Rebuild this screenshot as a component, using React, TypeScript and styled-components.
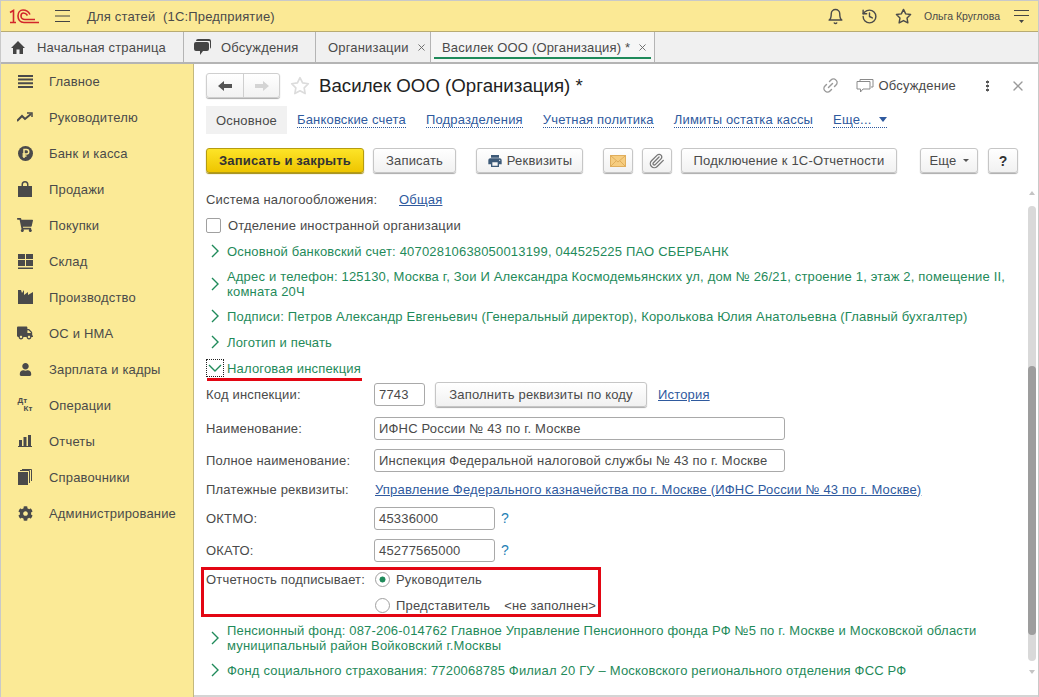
import { FunctionComponent, ReactNode } from "react"
import styled, { createGlobalStyle } from "styled-components"
import { FaShoppingCart, FaUser, FaCog, FaTruck } from "react-icons/fa"
import { FiBell, FiStar, FiX, FiLink2 } from "react-icons/fi"
import { LuHistory, LuPaperclip } from "react-icons/lu"
import { MdPrint } from "react-icons/md"

const Global = createGlobalStyle`
    html, body{
        margin: 0;
        padding: 0;
        background: #fff;
    }
    *{
        box-sizing: border-box;
    }
`

const Page = styled.div`
    width: 1039px;
    height: 697px;
    overflow: hidden;
    display: flex;
    flex-direction: column;
    font-family: "Liberation Sans", Arial, sans-serif;
    font-size: 13px;
    letter-spacing: 0.18px;
    color: #4a4a4a;
    border: 1px solid #c9c9c9;
    border-bottom: none;
`

const TopBar = styled.div`
    height: 31px;
    flex: none;
    background: #fbe995;
    border-bottom: 1px solid #b8ab72;
    display: flex;
    align-items: center;
    padding-left: 8px;
`

const BurgerSlot = styled.span`
    margin-left: 16px;
    display: flex;
`

const Title = styled.div`
    margin-left: 17px;
    white-space: pre;
    flex: 1;
`

const TopIcons = styled.div`
    display: flex;
    align-items: center;
    gap: 17px;
    margin-right: 9px;
    svg{
        display: block;
    }
`

const UserName = styled.span`
    font-size: 10.5px;
    letter-spacing: 0;
    margin: 0 -3px 0 -5px;
`

const TabBar = styled.div`
    height: 32px;
    flex: none;
    background: #f0f0f0;
    border-bottom: 2px solid #b4b4b4;
    display: flex;
`

const Tab = styled.div<{ $w: number; $pl?: number; $active?: boolean }>`
    width: ${p => p.$w}px;
    height: 30px;
    flex: none;
    display: flex;
    align-items: center;
    border-right: 1px solid #b4b4b4;
    padding-left: ${p => p.$pl ?? 10}px;
    position: relative;
    background: ${p => (p.$active ? "#f6f6f6" : "transparent")};
    ${p => p.$active && `
        &::after{
            content: "";
            position: absolute;
            left: 3px;
            right: 3px;
            bottom: 3px;
            height: 2px;
            background: #1f8a5a;
        }
    `}
`

const TabLabel = styled.span<{ $ml?: number }>`
    margin-left: ${p => p.$ml ?? 0}px;
    white-space: nowrap;
`

const TabClose = styled(FiX)`
    margin-left: 7px;
    font-size: 11px;
    color: #666;
`

const Body = styled.div`
    flex: 1;
    display: flex;
    min-height: 0;
`

const Sidebar = styled.nav`
    width: 193px;
    flex: none;
    background: #fbea96;
    border-right: 1px solid #c4b97d;
    display: flex;
    flex-direction: column;
`

const SideItem = styled.div`
    height: 36px;
    display: flex;
    align-items: center;
    padding-left: 16px;
    &:first-child{
        margin-top: -1px;
    }
`

const SideIcon = styled.div`
    width: 16px;
    height: 16px;
    margin-right: 16px;
    display: flex;
    align-items: center;
    justify-content: center;
`

const DtKt = styled.span`
    font-size: 8px;
    font-weight: bold;
    line-height: 8px;
    letter-spacing: 0;
    display: flex;
    flex-direction: column;
    span:last-child{
        margin-left: 6px;
    }
`

const Main = styled.main`
    flex: 1;
    min-width: 0;
    display: flex;
    flex-direction: column;
    padding-left: 12px;
    border-bottom: 2px solid #d4d4d4;
`

const Heading = styled.div`
    height: 42px;
    flex: none;
    display: flex;
    align-items: center;
    padding-top: 1px;
`

const NavGroup = styled.div`
    width: 74px;
    height: 25px;
    display: flex;
    border: 1px solid #cfcfcf;
    border-radius: 3px;
    box-shadow: 0 1px 1px #aaa;
    background: linear-gradient(#fff, #f2f2f2);
`

const NavButton = styled.div<{ $muted?: boolean }>`
    flex: ${p => (p.$muted ? 1 : "none")};
    width: 37px;
    display: flex;
    align-items: center;
    justify-content: center;
    ${p => !p.$muted && "border-right: 1px solid #cfcfcf;"}
`

const HeadingStar = styled(FiStar)`
    margin-left: 10px;
    color: #dcdcdc;
    font-size: 20px;
`

const HeadingText = styled.h1`
    margin: 0 0 0 9px;
    font-size: 18.7px;
    letter-spacing: 0;
    font-weight: normal;
    color: #222;
    flex: 1;
    white-space: nowrap;
`

const HeadingTools = styled.div`
    display: flex;
    align-items: center;
    color: #9a9a9a;
    padding-right: 12px;
`

const ToolLink = styled(FiLink2)`
    transform: rotate(-45deg);
    margin-right: 17px;
`

const ToolText = styled.span`
    color: #4a4a4a;
    margin: 0 30px 0 4px;
`

const Dots = styled.span`
    width: 3px;
    height: 12px;
    margin-right: 21px;
    background: radial-gradient(circle at center, #555 1.4px, transparent 1.6px) 0 0 / 3px 4px;
`

const Sections = styled.div`
    height: 28px;
    flex: none;
    display: flex;
    align-items: center;
    gap: 20px;
`

const SectionCurrent = styled.div`
    width: 81px;
    height: 28px;
    background: #f1f1f1;
    display: flex;
    align-items: center;
    justify-content: center;
    margin-right: -10px;
`

const SectionLink = styled.a`
    color: #2f5a9e;
    border-bottom: 1px dotted #2f5a9e;
    line-height: 15px;
    display: flex;
    align-items: center;
`

const Caret = styled.span`
    margin-left: 8px;
    border-left: 4px solid transparent;
    border-right: 4px solid transparent;
    border-top: 5px solid #2f5a9e;
`

const SmallCaret = styled.span`
    margin-left: 6px;
    border-left: 3px solid transparent;
    border-right: 3px solid transparent;
    border-top: 3px solid #555;
`

const Toolbar = styled.div`
    height: 25px;
    margin-top: 14px;
    flex: none;
    display: flex;
    align-items: center;
`

const Button = styled.div<{ $w: number; $ml?: number; $primary?: boolean }>`
    width: ${p => p.$w}px;
    height: 25px;
    flex: none;
    margin-left: ${p => p.$ml ?? 0}px;
    display: flex;
    align-items: center;
    justify-content: center;
    white-space: nowrap;
    border-radius: 3px;
    border: 1px solid ${p => (p.$primary ? "#b59c10" : "#c6c6c6")};
    box-shadow: 0 1px 1px ${p => (p.$primary ? "#a08a10" : "#aaa")};
    background: ${p => (p.$primary ? "linear-gradient(#fde428, #eec500)" : "linear-gradient(#fff, #f1f1f1)")};
    color: ${p => (p.$primary ? "#333" : "#4a4a4a")};
    font-weight: ${p => (p.$primary ? "bold" : "normal")};
`

const PrintIcon = styled(MdPrint)`
    margin-right: 4px;
    color: #3d5a78;
`

const Question = styled.b`
    font-size: 14px;
    color: #333;
`

const FormArea = styled.div`
    flex: 1;
    min-height: 0;
    margin-top: 13px;
    display: flex;
`

const Fields = styled.div`
    flex: 1;
    min-width: 0;
    display: flex;
    flex-direction: column;
`

const Row = styled.div<{ $h?: number; $mt?: number }>`
    height: ${p => p.$h ?? 26}px;
    margin-top: ${p => p.$mt ?? 0}px;
    flex: none;
    display: flex;
    align-items: center;
    white-space: nowrap;
`

const Label = styled.div<{ $w?: number }>`
    width: ${p => p.$w ?? 168}px;
    flex: none;
`

const Link = styled.a<{ $ml?: number }>`
    margin-left: ${p => p.$ml ?? 0}px;
    color: #2f5a9e;
    text-decoration: underline;
`

const Box = styled.span`
    width: 15px;
    height: 15px;
    margin-right: 7px;
    border: 1px solid #a0a0a0;
    border-radius: 2px;
    background: #fff;
`

const Group = styled.div<{ $focus?: boolean }>`
    display: flex;
    align-items: center;
    color: #1f8a5a;
    line-height: 15px;
    position: relative;
    white-space: pre-line;
    ${p => p.$focus && `
        &::after{
            content: "";
            position: absolute;
            left: 1px;
            right: -1px;
            bottom: -5px;
            height: 3px;
            background: #e30613;
        }
    `}
`

const Chevron = styled.span<{ $focus?: boolean }>`
    width: 16px;
    height: 16px;
    margin: 0 4px 0 1px;
    display: flex;
    align-items: center;
    justify-content: center;
    flex: none;
    outline: ${p => (p.$focus ? "1px dotted #222" : "none")};
    svg{
        display: block;
    }
`

const Input = styled.div<{ $w: number }>`
    width: ${p => p.$w}px;
    height: 23px;
    flex: none;
    border: 1px solid #a9a9a9;
    border-radius: 3px;
    padding-left: 4px;
    display: flex;
    align-items: center;
    background: #fff;
`

const Hint = styled.span`
    margin-left: 6px;
    font-size: 14px;
    color: #1f7fb5;
`

const Signer = styled.div`
    width: 400px;
    height: 50px;
    margin: 4px 0 2px -5px;
    flex: none;
    border: 3px solid #e30613;
    padding: 0 0 0 2px;
    display: flex;
    flex-direction: column;
    gap: 8px;
`

const SignerRow = styled.div`
    height: 18px;
    display: flex;
    align-items: center;
    white-space: nowrap;
`

const Radio = styled.span<{ $on?: boolean }>`
    width: 15px;
    height: 15px;
    margin: 0 6px 0 1px;
    border: 1px solid #a0a0a0;
    border-radius: 50%;
    background: ${p => (p.$on ? "radial-gradient(circle, #1f8a5a 2.7px, #fff 3.3px)" : "#fff")};
`

const Muted = styled.span`
    margin-left: 14px;
`

const ScrollBar = styled.div`
    width: 12px;
    flex: none;
    display: flex;
    flex-direction: column;
    align-items: center;
    padding-top: 5px;
`

const ScrollArrow = styled.span<{ $down?: boolean }>`
    flex: none;
    border-left: 3px solid transparent;
    border-right: 3px solid transparent;
    ${p => (p.$down ? "border-top" : "border-bottom")}: 4px solid #c4c4c4;
`

const ScrollTrack = styled.div`
    width: 8px;
    height: 455px;
    margin: 11px 0 9px;
    flex: none;
    border-radius: 4px;
    background: #d9d9d9;
    padding-top: 160px;
`

const ScrollThumb = styled.div`
    height: 269px;
    border-radius: 4px;
    background: #9d9d9d;
`

const Logo = () => (
    <svg width="30" height="15" viewBox="0 0 30 15" fill="none" stroke="#d2262b" strokeWidth="1.600">
        <path d="M1 3.500 4.500 1.500V13M1 13.500H7" />
        <path d="M21 5.500C19.500 2.500 16.500 1 14 1 11 1 9 3.500 9 7s2 6.500 6 6.500H30" />
        <path d="M18.500 6.500C17.500 5 16 4 14.500 4 13 4 12 5.500 12 7s1.500 3.500 4 3.500H26" />
    </svg>
)

const Burger = () => (
    <svg width="15" height="12" viewBox="0 0 15 12" stroke="#444" strokeWidth="1">
        <path d="M0 .5H15M0 6H15M0 11.500H15" />
    </svg>
)

const Filters = () => (
    <svg width="15" height="14" viewBox="0 0 15 14" fill="#444">
        <path d="M0 1h15v1H0zM0 6h15v1H0zM5 11h5l-2.500 3z" />
    </svg>
)

const Home = () => (
    <svg width="14" height="13" viewBox="0 0 14 13" fill="#444">
        <path d="M7 0 14 7h-2v6H8.500V8.500h-3V13H2V7H0z" />
    </svg>
)

const Bubbles = () => (
    <svg width="17" height="16" viewBox="0 0 17 16" fill="#444">
        <path d="M4 0h11a2 2 0 0 1 2 2v6a2 2 0 0 1-1 1.700V3a1 1 0 0 0-1-1H2a2 2 0 0 1 2-2z" />
        <path d="M2 3h11a2 2 0 0 1 2 2v5a2 2 0 0 1-2 2H9l-3 4v-4H2a2 2 0 0 1-2-2V5a2 2 0 0 1 2-2z" />
    </svg>
)

const ArrowLeft = () => (
    <svg width="14" height="10" viewBox="0 0 14 10" fill="#555">
        <path d="M0 5 6 0v3h8v4H6v3z" />
    </svg>
)

const ArrowRight = () => (
    <svg width="14" height="10" viewBox="0 0 14 10" fill="#d4d4d4">
        <path d="M14 5 8 0v3H0v4h8v3z" />
    </svg>
)

const ChatOutline = () => (
    <svg width="18" height="16" viewBox="0 0 18 16" fill="none" stroke="#8a8a8a">
        <path d="M4 3V1.500h13V9h-2" />
        <path d="M1 3.500h13V11H7l-2.500 3v-3H1z" />
    </svg>
)

const Mail = () => (
    <svg width="16" height="12" viewBox="0 0 16 12">
        <rect x=".5" y=".5" width="15" height="11" fill="#f6cd80" stroke="#e0ae5c" />
        <path d="M1 1l7 6 7-6M1 11l5-5M15 11l-5-5" fill="none" stroke="#e0ae5c" />
    </svg>
)

const ChevronRight = () => (
    <svg width="8" height="14" viewBox="0 0 8 14" fill="none" stroke="#1f8a5a" strokeWidth="1.400">
        <path d="M1 1l6 6-6 6" />
    </svg>
)

const ChevronDown = () => (
    <svg width="14" height="8" viewBox="0 0 14 8" fill="none" stroke="#1f8a5a" strokeWidth="1.400">
        <path d="M1 1l6 6 6-6" />
    </svg>
)

const sideIcons: Record<string, ReactNode> = {
    main: (
        <svg width="15" height="13" viewBox="0 0 15 13" fill="#4a4a4a">
            <path d="M0 0h15v2H0zM0 3.600h15v2H0zM0 7.300h15v2H0zM0 11h15v2H0z" />
        </svg>
    ),
    chief: (
        <svg width="16" height="10" viewBox="0 0 16 10" fill="none" stroke="#4a4a4a" strokeWidth="2">
            <path d="M0 9l5-5 3 3 6-5" />
            <path d="M10 1h5v4" strokeWidth="1.500" />
        </svg>
    ),
    bank: (
        <svg width="15" height="15" viewBox="0 0 15 15">
            <circle cx="7.500" cy="7.500" r="7.500" fill="#4a4a4a" />
            <path d="M6 12V3.500h2.500a2.200 2.200 0 0 1 0 4.500H4.500M4.500 10H8.500" fill="none" stroke="#fbea96" strokeWidth="1.500" />
        </svg>
    ),
    sales: (
        <svg width="14" height="16" viewBox="0 0 14 16" fill="#4a4a4a">
            <path d="M0 5h3.500V3.500a3.500 3.500 0 0 1 7 0V5H14v11H0zM5 5h4V3.500a2 2 0 0 0-4 0z" />
        </svg>
    ),
    buy: <FaShoppingCart size={16} />,
    stock: (
        <svg width="15" height="15" viewBox="0 0 15 15" fill="#4a4a4a">
            <path d="M0 0h7v5H0zM8 0h7v5H8zM0 6h7v6H0zM8 6h7v6H8zM0 13.500h15V15H0z" />
        </svg>
    ),
    factory: (
        <svg width="15" height="14" viewBox="0 0 15 14" fill="#4a4a4a">
            <path d="M0 0h3l1 3 2-3v5l4-3v3l5-3v12H0z" />
        </svg>
    ),
    truck: <FaTruck size={16} />,
    person: <FaUser size={13} />,
    ops: (
        <DtKt>
            <span>Дт</span>
            <span>Кт</span>
        </DtKt>
    ),
    reports: (
        <svg width="14" height="12" viewBox="0 0 14 12" fill="#4a4a4a">
            <path d="M1 5h3v6H1zM5.500 2h3v9h-3zM10 0h3v11h-3zM0 11h14v1H0z" />
        </svg>
    ),
    books: (
        <svg width="14" height="16" viewBox="0 0 14 16" fill="none" stroke="#4a4a4a">
            <rect x="0" y="3" width="10" height="13" fill="#4a4a4a" stroke="none" />
            <path d="M2 1.500h9.500V14M4 .5h9.500V12" />
        </svg>
    ),
    admin: <FaCog size={15} />,
}

const sideItems: [string, string][] = [
    ["main", "Главное"],
    ["chief", "Руководителю"],
    ["bank", "Банк и касса"],
    ["sales", "Продажи"],
    ["buy", "Покупки"],
    ["stock", "Склад"],
    ["factory", "Производство"],
    ["truck", "ОС и НМА"],
    ["person", "Зарплата и кадры"],
    ["ops", "Операции"],
    ["reports", "Отчеты"],
    ["books", "Справочники"],
    ["admin", "Администрирование"],
]

const Collapsed: FunctionComponent<{ h?: number; children: ReactNode }> = ({ h, children }) => (
    <Row $h={h}>
        <Group>
            <Chevron>
                <ChevronRight />
            </Chevron>
            <span>{children}</span>
        </Group>
    </Row>
)

const App: FunctionComponent = () => {
    return (
        <Page>
            <Global />
            <TopBar>
                <Logo />
                <BurgerSlot>
                    <Burger />
                </BurgerSlot>
                <Title>Для статей  (1С:Предприятие)</Title>
                <TopIcons>
                    <FiBell size={17} />
                    <LuHistory size={17} />
                    <FiStar size={17} />
                    <UserName>Ольга Круглова</UserName>
                    <Filters />
                </TopIcons>
            </TopBar>
            <TabBar>
                <Tab $w={183}>
                    <Home />
                    <TabLabel $ml={12}>Начальная страница</TabLabel>
                </Tab>
                <Tab $w={132}>
                    <Bubbles />
                    <TabLabel $ml={10}>Обсуждения</TabLabel>
                </Tab>
                <Tab $w={115} $pl={12}>
                    <TabLabel>Организации</TabLabel>
                    <TabClose />
                </Tab>
                <Tab $w={224} $pl={11} $active>
                    <TabLabel>Василек ООО (Организация) *</TabLabel>
                    <TabClose />
                </Tab>
            </TabBar>
            <Body>
                <Sidebar>
                    {sideItems.map(([icon, text]) => (
                        <SideItem key={icon}>
                            <SideIcon>{sideIcons[icon]}</SideIcon>
                            {text}
                        </SideItem>
                    ))}
                </Sidebar>
                <Main>
                    <Heading>
                        <NavGroup>
                            <NavButton>
                                <ArrowLeft />
                            </NavButton>
                            <NavButton $muted>
                                <ArrowRight />
                            </NavButton>
                        </NavGroup>
                        <HeadingStar />
                        <HeadingText>Василек ООО (Организация) *</HeadingText>
                        <HeadingTools>
                            <ToolLink size={17} />
                            <ChatOutline />
                            <ToolText>Обсуждение</ToolText>
                            <Dots />
                            <FiX size={16} />
                        </HeadingTools>
                    </Heading>
                    <Sections>
                        <SectionCurrent>Основное</SectionCurrent>
                        <SectionLink>Банковские счета</SectionLink>
                        <SectionLink>Подразделения</SectionLink>
                        <SectionLink>Учетная политика</SectionLink>
                        <SectionLink>Лимиты остатка кассы</SectionLink>
                        <SectionLink>
                            Еще...
                            <Caret />
                        </SectionLink>
                    </Sections>
                    <Toolbar>
                        <Button $w={158} $primary>Записать и закрыть</Button>
                        <Button $w={83} $ml={9}>Записать</Button>
                        <Button $w={107} $ml={20}>
                            <PrintIcon size={16} />
                            Реквизиты
                        </Button>
                        <Button $w={30} $ml={20}><Mail /></Button>
                        <Button $w={30} $ml={9}><LuPaperclip size={16} color="#777" /></Button>
                        <Button $w={216} $ml={9}>Подключение к 1С-Отчетности</Button>
                        <Button $w={58} $ml={23}>
                            Еще
                            <SmallCaret />
                        </Button>
                        <Button $w={30} $ml={10}><Question>?</Question></Button>
                    </Toolbar>
                    <FormArea>
                        <Fields>
                            <Row>
                                <Label $w={193}>Система налогообложения:</Label>
                                <Link>Общая</Link>
                            </Row>
                            <Row>
                                <Box />
                                Отделение иностранной организации
                            </Row>
                            <Collapsed>Основной банковский счет: 40702810638050013199, 044525225 ПАО СБЕРБАНК</Collapsed>
                            <Collapsed h={39}>
                                {"Адрес и телефон: 125130, Москва г, Зои И Александра Космодемьянских ул, дом № 26/21, строение 1, этаж 2, помещение II,\nкомната 20Ч"}
                            </Collapsed>
                            <Collapsed>Подписи: Петров Александр Евгеньевич (Генеральный директор), Королькова Юлия Анатольевна (Главный бухгалтер)</Collapsed>
                            <Collapsed>Логотип и печать</Collapsed>
                            <Row>
                                <Group $focus>
                                    <Chevron $focus>
                                        <ChevronDown />
                                    </Chevron>
                                    Налоговая инспекция
                                </Group>
                            </Row>
                            <Row>
                                <Label>Код инспекции:</Label>
                                <Input $w={51}>7743</Input>
                                <Button $w={212} $ml={10}>Заполнить реквизиты по коду</Button>
                                <Link $ml={11}>История</Link>
                            </Row>
                            <Row $mt={8}>
                                <Label>Наименование:</Label>
                                <Input $w={411}>ИФНС России № 43 по г. Москве</Input>
                            </Row>
                            <Row $mt={6}>
                                <Label>Полное наименование:</Label>
                                <Input $w={411}>Инспекция Федеральной налоговой службы № 43 по г. Москве</Input>
                            </Row>
                            <Row $mt={3}>
                                <Label>Платежные реквизиты:</Label>
                                <Link $ml={1}>Управление Федерального казначейства по г. Москве (ИФНС России № 43 по г. Москве)</Link>
                            </Row>
                            <Row $mt={3}>
                                <Label>ОКТМО:</Label>
                                <Input $w={121}>45336000</Input>
                                <Hint>?</Hint>
                            </Row>
                            <Row $mt={6}>
                                <Label>ОКАТО:</Label>
                                <Input $w={121}>45277565000</Input>
                                <Hint>?</Hint>
                            </Row>
                            <Signer>
                                <SignerRow>
                                    <Label>Отчетность подписывает:</Label>
                                    <Radio $on />
                                    Руководитель
                                </SignerRow>
                                <SignerRow>
                                    <Label />
                                    <Radio />
                                    Представитель
                                    <Muted>&lt;не заполнен&gt;</Muted>
                                </SignerRow>
                            </Signer>
                            <Collapsed h={38}>
                                {"Пенсионный фонд: 087-206-014762 Главное Управление Пенсионного фонда РФ №5 по г. Москве и Московской области\nмуниципальный район Войковский г.Москвы"}
                            </Collapsed>
                            <Collapsed>Фонд социального страхования: 7720068785 Филиал 20 ГУ – Московского регионального отделения ФСС РФ</Collapsed>
                        </Fields>
                        <ScrollBar>
                            <ScrollArrow />
                            <ScrollTrack>
                                <ScrollThumb />
                            </ScrollTrack>
                            <ScrollArrow $down />
                        </ScrollBar>
                    </FormArea>
                </Main>
            </Body>
        </Page>
    )
}

export default App
